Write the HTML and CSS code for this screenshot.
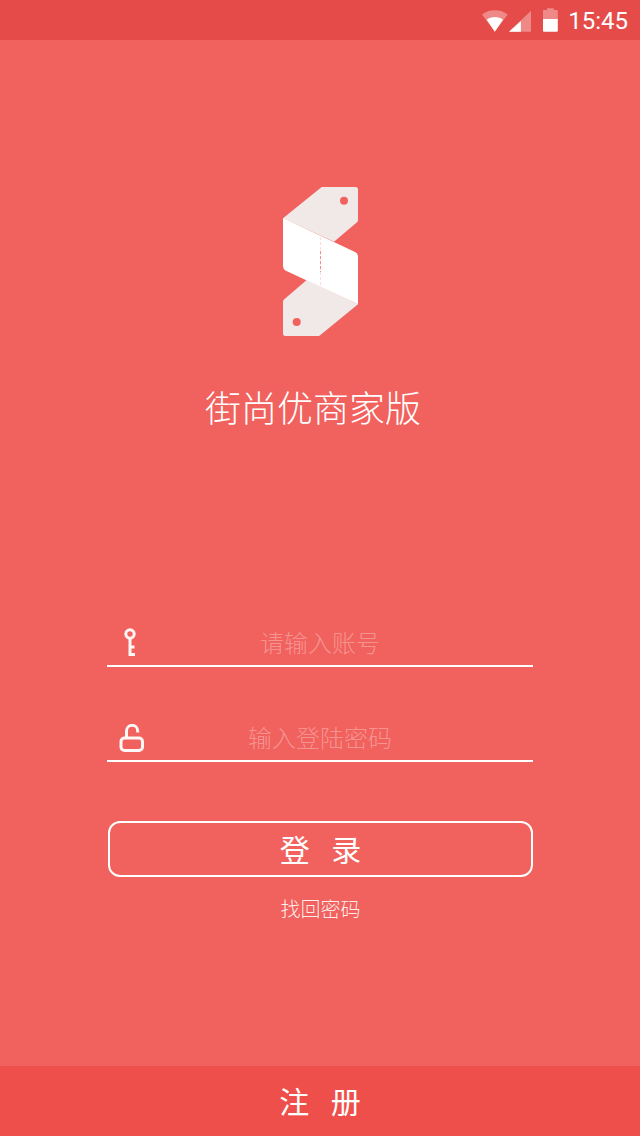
FILE: index.html
```html
<!DOCTYPE html>
<html lang="zh-CN">
<head>
  <meta charset="UTF-8">
  <meta name="viewport" content="width=device-width, initial-scale=1.0">
  <title>街尚优商家版</title>
  <link rel="stylesheet" href="styles.css">
</head>
<body>
  <header class="status-bar">
    <svg class="status-wifi" width="26" height="22" viewBox="0 0 26 22">
      <path class="faint" d="M0 4.500C3.500 1.500 8 0 13 0s9.500 1.500 13 4.500L13 22z"/>
      <path class="solid" d="M4.800 9.800C7 8 9.900 7 13 7s6 1 8.200 2.800L13 22z"/>
    </svg>
    <svg class="status-signal" width="23" height="22" viewBox="0 0 23 22">
      <path class="faint" d="M23 0v22H0z"/>
      <path class="solid" d="M12 11v11H0z"/>
    </svg>
    <svg class="status-battery" width="15" height="24" viewBox="0 0 15 24">
      <path class="faint" d="M4 0h7v2h3a1 1 0 0 1 1 1v8H0V3a1 1 0 0 1 1-1h3z"/>
      <path class="solid" d="M0 11h15v12a1 1 0 0 1-1 1H1a1 1 0 0 1-1-1z"/>
    </svg>
    <span class="status-time">15:45</span>
  </header>

  <main class="login">
    <svg class="logo" width="75" height="149" viewBox="0 0 75 149">
      <path class="logo-tag" d="M38.700 0H72.500a2.500 2.500 0 0 1 2.500 2.500V33a3 3 0 0 1-1 2.300L51 54.700 0 31.300z"/>
      <path class="logo-tag" d="M23.700 93 75 117.300 38 147.500a6 6 0 0 1-2 1.500H2.500A2.500 2.500 0 0 1 0 146.500V115a3.500 3.500 0 0 1 1-2.500z"/>
      <path class="logo-band" d="M0 31 72 65a5 5 0 0 1 3 4v48.300L4 84.200a6 6 0 0 1-4-5z"/>
      <path class="logo-fold" d="M37.500 50v50"/>
      <path class="logo-fold-mid" d="M37.500 64v21"/>
      <circle class="logo-hole" cx="61" cy="13.700" r="4"/>
      <circle class="logo-hole" cx="13.700" cy="135" r="4"/>
    </svg>

    <h1 class="app-name">街尚优商家版</h1>

    <form class="login-form">
      <div class="field">
        <svg class="field-icon icon-key" width="14" height="30" viewBox="0 0 14 30">
          <circle cx="6" cy="7" r="4.200"/>
          <path d="M6 11.500V27.500H11M6 20H10.500"/>
        </svg>
        <input type="text" placeholder="请输入账号">
      </div>

      <div class="field">
        <svg class="field-icon icon-lock" width="26" height="30" viewBox="0 0 26 30">
          <rect x="2" y="14" width="21.500" height="12.500" rx="3.500"/>
          <path d="M7.500 13V6.900a5.600 5.600 0 0 1 11.200 0v1.500"/>
        </svg>
        <input type="password" placeholder="输入登陆密码">
      </div>

      <button class="login-btn" type="button">登 录</button>
      <a class="forgot-link" href="#">找回密码</a>
    </form>
  </main>

  <footer class="register-bar">注 册</footer>
</body>
</html>
```

FILE: styles.css
```css
* {
  margin: 0;
  padding: 0;
  box-sizing: border-box;
  font-family: "Noto Sans CJK SC", "Noto Sans", sans-serif;
}

html, body {
  height: 100%;
}

body {
  background: #f1625e;
  color: white;
  display: flex;
  flex-direction: column;
  min-height: 1136px;
}

/* Status bar */
.status-bar {
  background: #e54b48;
  height: 40px;
  flex: none;
  display: flex;
  align-items: center;
  padding: 0 12px 0 482px;
}

.status-bar .faint {
  fill: rgba(255, 255, 255, 0.35);
}

.status-bar .solid {
  fill: white;
}

.status-wifi {
  margin-top: 2px;
}

.status-signal {
  margin: 2px 0 0 1px;
}

.status-battery {
  margin: 0 0 0 12px;
}

.status-time {
  font-family: Roboto, sans-serif;
  font-size: 24px;
  line-height: 40px;
  margin: 2px 0 0 10px;
}

/* Login */
.login {
  flex: 1;
  display: flex;
  flex-direction: column;
  align-items: center;
  padding-top: 147px;
}

.logo {
  display: block;
}

.logo-tag {
  fill: #f1e8e8;
}

.logo-band {
  fill: white;
}

.logo-fold {
  stroke: #fbdcdb;
  stroke-width: 1;
  stroke-dasharray: 3 2;
  fill: none;
}

.logo-fold-mid {
  stroke: #f68f8c;
  stroke-width: 1;
  stroke-dasharray: 3 2;
  fill: none;
}

.logo-hole {
  fill: #f1625e;
}

.app-name {
  font-size: 36px;
  font-weight: 300;
  line-height: 52px;
  margin: 44px 14px 0 0;
}

.login-form {
  width: 426px;
  margin-top: 186px;
  display: flex;
  flex-direction: column;
  align-items: center;
}

.field {
  position: relative;
  width: 100%;
  height: 49px;
  margin-bottom: 46px;
  border-bottom: 2px solid white;
}

.field input {
  width: 100%;
  height: 47px;
  background: none;
  border: none;
  outline: none;
  color: white;
  font-size: 24px;
  font-weight: 300;
  text-align: center;
}

.field input::placeholder {
  color: rgba(255, 255, 255, 0.33);
  opacity: 1;
}

.field-icon {
  position: absolute;
  fill: none;
  stroke: white;
  stroke-width: 3;
  opacity: 0.95;
}

.icon-key {
  left: 17px;
  top: 9px;
}

.icon-lock {
  left: 12px;
  top: 11px;
}

.login-btn {
  width: 425px;
  height: 56px;
  margin: 13px 0 0 1px;
  padding-bottom: 2px;
  background: none;
  border: 2px solid white;
  border-radius: 12px;
  color: white;
  font-size: 30px;
  font-weight: 400;
  word-spacing: 15px;
}

.forgot-link {
  color: rgba(255, 255, 255, 0.9);
  text-decoration: none;
  font-size: 20px;
  font-weight: 300;
  line-height: 30px;
  margin: 17px 0 0 1px;
}

/* Bottom bar */
.register-bar {
  background: #ef4f4a;
  height: 70px;
  padding-bottom: 3px;
  flex: none;
  display: flex;
  align-items: center;
  justify-content: center;
  font-size: 30px;
  font-weight: 400;
  word-spacing: 15px;
}
```
